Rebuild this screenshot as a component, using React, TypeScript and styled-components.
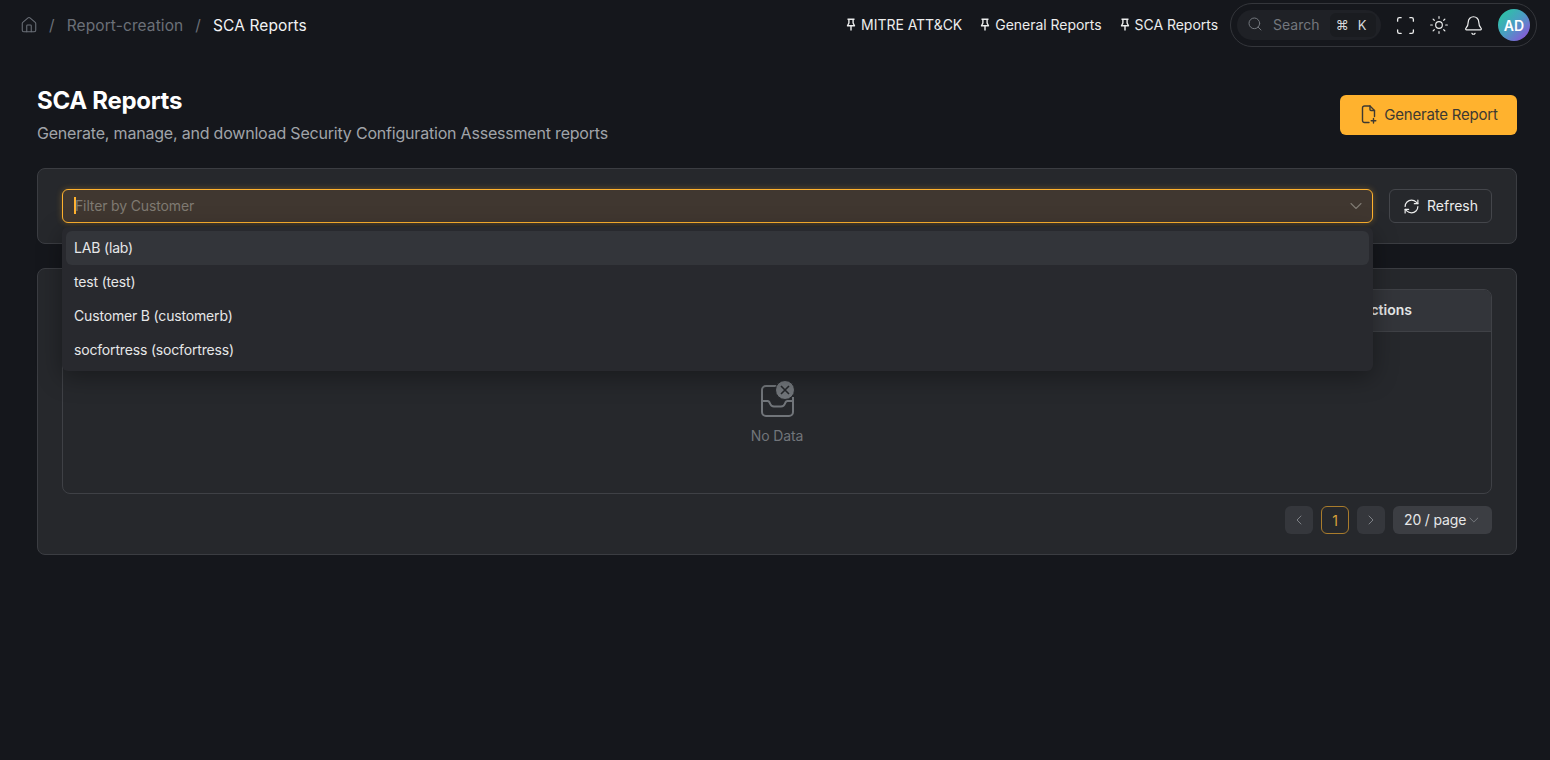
import React from 'react';
import styled, { createGlobalStyle } from 'styled-components';
import { Bell, ChevronDown, ChevronLeft, ChevronRight, Home, RefreshCw, Scan, Search, Sun } from 'lucide-react';

const GlobalStyle = createGlobalStyle`
  html, body {
    margin: 0;
    height: 100%;
    background: #15171c;
    overflow: hidden;
  }
  * { box-sizing: border-box; }
  body {
    font-family: Inter, "Liberation Sans", sans-serif;
    font-size: 14px;
    color: #e8e9eb;
  }
`;

const Page = styled.div`
  height: 760px;
  display: flex;
  flex-direction: column;
`;

const TopBar = styled.header`
  height: 50px;
  padding: 3px 13px 0 20px;
  display: flex;
  align-items: flex-start;
  justify-content: space-between;
`;

const Crumbs = styled.nav`
  height: 44px;
  display: flex;
  align-items: center;
  font-size: 15.5px;
  letter-spacing: 0.1px;
  color: #6b7078;
  svg {
    margin-right: -1px;
  }
`;

const CrumbSep = styled.span`
  margin: 0 12px;
`;

const CrumbCurrent = styled.span`
  color: #f2f3f4;
`;

const TopRight = styled.div`
  display: flex;
  align-items: center;
`;

const PinLink = styled.a`
  height: 44px;
  margin-right: 18px;
  padding-bottom: 2px;
  display: flex;
  align-items: center;
  gap: 5px;
  font-size: 14px;
  letter-spacing: -0.03px;
  color: #eceded;
`;

const ToolPill = styled.div`
  width: 307px;
  height: 44px;
  margin-left: -6px;
  padding: 0 6px;
  border: 1px solid #34363b;
  border-radius: 22px;
  display: flex;
  align-items: center;
  color: #eceded;
`;

const SearchBox = styled.div`
  flex: none;
  width: 144px;
  height: 30px;
  margin-right: 7px;
  padding: 0 5px 2px 10px;
  border-radius: 15px;
  background: #1f2126;
  display: flex;
  align-items: center;
  gap: 10px;
  font-size: 14px;
  color: #73777d;
`;

const Kbd = styled.span`
  margin: 2px 0 0 auto;
  width: 46px;
  height: 24px;
  padding-right: 4px;
  border-radius: 6px;
  background: #1a1c20;
  display: flex;
  align-items: center;
  justify-content: center;
  gap: 9px;
  font-size: 13px;
  color: #d8d9db;
`;

const ToolIcon = styled.span`
  flex: none;
  width: 34px;
  height: 30px;
  display: flex;
  align-items: center;
  justify-content: center;
`;

const Avatar = styled.div`
  flex: none;
  width: 32px;
  height: 32px;
  margin-left: 8px;
  border-radius: 50%;
  background: linear-gradient(135deg, #2fbfa8 15%, #4b9cc4 50%, #8a55d8 90%);
  display: flex;
  align-items: center;
  justify-content: center;
  font-size: 14px;
  font-weight: 600;
  color: #fff;
`;

const Main = styled.main`
  padding: 0 33px 0 37px;
  display: flex;
  flex-direction: column;
`;

const HeaderRow = styled.div`
  height: 118px;
  padding-top: 36px;
  display: flex;
  justify-content: space-between;
`;

const Title = styled.h1`
  margin: 0;
  font-size: 24px;
  line-height: 30px;
  font-weight: 700;
  letter-spacing: -0.3px;
  color: #fff;
`;

const Subtitle = styled.p`
  margin: 5px 0 0;
  font-size: 16px;
  line-height: 24px;
  letter-spacing: -0.2px;
  color: #a0a4a9;
`;

const GenerateButton = styled.button`
  width: 177px;
  height: 40px;
  margin-top: 9px;
  padding: 0 0 1px 2px;
  border: 0;
  border-radius: 6px;
  background: #ffb22e;
  display: flex;
  align-items: center;
  justify-content: center;
  gap: 7px;
  font: inherit;
  font-size: 15px;
  letter-spacing: -0.2px;
  color: #3d3932;
`;

const Card = styled.section`
  margin-bottom: 24px;
  padding: 20px 24px;
  border: 1px solid #3b3d42;
  border-radius: 8px;
  background: #26282c;
`;

const FilterRow = styled.div`
  display: flex;
  gap: 16px;
`;

const SelectWrap = styled.div`
  position: relative;
  flex: 1;
`;

const SelectInput = styled.div`
  height: 34px;
  padding: 0 6px 2px 11px;
  border: 1px solid #ffb22e;
  border-radius: 6px;
  background: #403730;
  box-shadow: 0 0 6px rgba(255, 178, 46, 0.3);
  display: flex;
  align-items: center;
  font-size: 14px;
  letter-spacing: -0.14px;
  color: #7f7a72;
`;

const Caret = styled.span`
  width: 2px;
  height: 17px;
  margin-right: -1px;
  background: #ffb22e;
`;

const Chevron = styled.span`
  margin: 2px 0 0 auto;
  display: flex;
  color: #7f7a72;
`;

const Menu = styled.ul`
  position: absolute;
  z-index: 2;
  top: 38px;
  left: 0;
  right: 0;
  margin: 0;
  padding: 4px;
  list-style: none;
  border-radius: 6px;
  background: #28292e;
  box-shadow: 0 6px 24px rgba(0, 0, 0, 0.35);
`;

const MenuItem = styled.li<{ $active?: boolean }>`
  height: 34px;
  padding: 0 8px 2px;
  border-radius: 6px;
  background: ${({ $active }) => ($active ? '#33353a' : 'transparent')};
  display: flex;
  align-items: center;
  font-size: 14px;
  letter-spacing: -0.17px;
  color: #e6e7e8;
`;

const RefreshButton = styled.button`
  width: 103px;
  height: 34px;
  padding: 0 0 2px;
  border: 1px solid #44464b;
  border-radius: 6px;
  background: transparent;
  display: flex;
  align-items: center;
  justify-content: center;
  gap: 7px;
  font: inherit;
  font-size: 14px;
  color: #eceded;
  svg {
    margin-top: 2px;
  }
`;

const Table = styled.div`
  height: 205px;
  border: 1px solid #3f4146;
  border-radius: 8px;
  overflow: hidden;
`;

const TableHead = styled.div`
  height: 42px;
  padding: 0 79px 2px 0;
  border-bottom: 1px solid #3f4146;
  background: #33353a;
  display: flex;
  align-items: center;
  justify-content: flex-end;
  font-size: 14px;
  font-weight: 600;
  color: #e6e7e8;
`;

const Empty = styled.div`
  height: 161px;
  padding-top: 47px;
  display: flex;
  flex-direction: column;
  align-items: center;
  gap: 10px;
  font-size: 14px;
  letter-spacing: -0.15px;
  color: #71757a;
`;

const Pager = styled.div`
  margin-top: 12px;
  display: flex;
  justify-content: flex-end;
  gap: 8px;
`;

const PageButton = styled.button<{ $current?: boolean }>`
  width: 28px;
  height: 28px;
  padding: 0;
  border: 1px solid ${({ $current }) => ($current ? '#a97c2c' : 'transparent')};
  border-radius: 6px;
  background: ${({ $current }) => ($current ? 'transparent' : '#35373c')};
  display: flex;
  align-items: center;
  justify-content: center;
  font: inherit;
  font-size: 14px;
  color: ${({ $current }) => ($current ? '#d9a03a' : '#7d8085')};
`;

const PageSize = styled.div`
  width: 99px;
  height: 28px;
  padding: 0 10px 2px 11px;
  border-radius: 6px;
  background: #3c3e43;
  display: flex;
  align-items: center;
  justify-content: space-between;
  font-size: 14px;
  letter-spacing: -0.15px;
  white-space: nowrap;
  color: #e6e7e8;
  svg {
    margin-top: 2px;
  }
`;

function PinIcon() {
  return (
    <svg width="10" height="13" viewBox="0 0 10 13" fill="none" stroke="currentColor" strokeWidth="1.4" strokeLinejoin="round">
      <path d="M1.5 1.2h7M2.9 1.2V5L1.5 7.8h7L7.1 5V1.2M5 7.8V12.5" />
    </svg>
  );
}

function FileAddIcon() {
  return (
    <svg width="16" height="19" viewBox="0 0 16 19" fill="none" stroke="currentColor" strokeWidth="1.4" strokeLinecap="round" strokeLinejoin="round">
      <path d="M8 17.5H3.5a2 2 0 0 1-2-2V3a2 2 0 0 1 2-2H9l4.5 4.5v6" />
      <path d="M9 1v3.5a1 1 0 0 0 1 1h3.5" />
      <path d="M12.5 13.5v4.5M10.2 15.7h4.6" />
    </svg>
  );
}

function EmptyIcon() {
  return (
    <svg width="48" height="38" viewBox="0 0 48 38" fill="none" stroke="#71757a" strokeWidth="2">
      <path d="M24 7H13a4 4 0 0 0-4 4v22a4 4 0 0 0 4 4h23a4 4 0 0 0 4-4V18" />
      <path d="M9 22h5.5c1.5 0 2 1 2.5 2.5.6 1.8 2 3 4 3h7c2 0 3.4-1.2 4-3 .5-1.5 1-2.5 2.5-2.5H40" />
      <circle cx="32" cy="11" r="9.5" fill="#71757a" stroke="#26282c" strokeWidth="1" />
      <path d="M28 7l8 8M36 7l-8 8" stroke="#26282c" strokeWidth="1.6" />
    </svg>
  );
}

const pinned = ['MITRE ATT&CK', 'General Reports', 'SCA Reports'];
const customers = ['LAB (lab)', 'test (test)', 'Customer B (customerb)', 'socfortress (socfortress)'];

export default function App() {
  return (
    <Page>
      <GlobalStyle />
      <TopBar>
        <Crumbs>
          <Home size={18} strokeWidth={1.4} />
          <CrumbSep>/</CrumbSep>
          Report-creation
          <CrumbSep>/</CrumbSep>
          <CrumbCurrent>SCA Reports</CrumbCurrent>
        </Crumbs>
        <TopRight>
          {pinned.map(name => (
            <PinLink key={name}>
              <PinIcon />
              {name}
            </PinLink>
          ))}
          <ToolPill>
            <SearchBox>
              <Search size={16} strokeWidth={1.5} />
              Search
              <Kbd>
                <span>⌘</span>
                <span>K</span>
              </Kbd>
            </SearchBox>
            <ToolIcon>
              <Scan size={21} strokeWidth={1.5} />
            </ToolIcon>
            <ToolIcon>
              <Sun size={20} strokeWidth={1.4} />
            </ToolIcon>
            <ToolIcon>
              <Bell size={21} strokeWidth={1.4} />
            </ToolIcon>
            <Avatar>AD</Avatar>
          </ToolPill>
        </TopRight>
      </TopBar>
      <Main>
        <HeaderRow>
          <div>
            <Title>SCA Reports</Title>
            <Subtitle>Generate, manage, and download Security Configuration Assessment reports</Subtitle>
          </div>
          <GenerateButton>
            <FileAddIcon />
            Generate Report
          </GenerateButton>
        </HeaderRow>
        <Card>
          <FilterRow>
            <SelectWrap>
              <SelectInput>
                <Caret />
                Filter by Customer
                <Chevron>
                  <ChevronDown size={20} strokeWidth={1.3} />
                </Chevron>
              </SelectInput>
              <Menu>
                {customers.map((name, i) => (
                  <MenuItem key={name} $active={i === 0}>
                    {name}
                  </MenuItem>
                ))}
              </Menu>
            </SelectWrap>
            <RefreshButton>
              <RefreshCw size={17} strokeWidth={1.7} />
              Refresh
            </RefreshButton>
          </FilterRow>
        </Card>
        <Card>
          <Table>
            <TableHead>Actions</TableHead>
            <Empty>
              <EmptyIcon />
              No Data
            </Empty>
          </Table>
          <Pager>
            <PageButton>
              <ChevronLeft size={16} strokeWidth={1.5} />
            </PageButton>
            <PageButton $current>1</PageButton>
            <PageButton>
              <ChevronRight size={16} strokeWidth={1.5} />
            </PageButton>
            <PageSize>
              20 / page
              <ChevronDown size={16} strokeWidth={1.2} color="#85888d" />
            </PageSize>
          </Pager>
        </Card>
      </Main>
    </Page>
  );
}
